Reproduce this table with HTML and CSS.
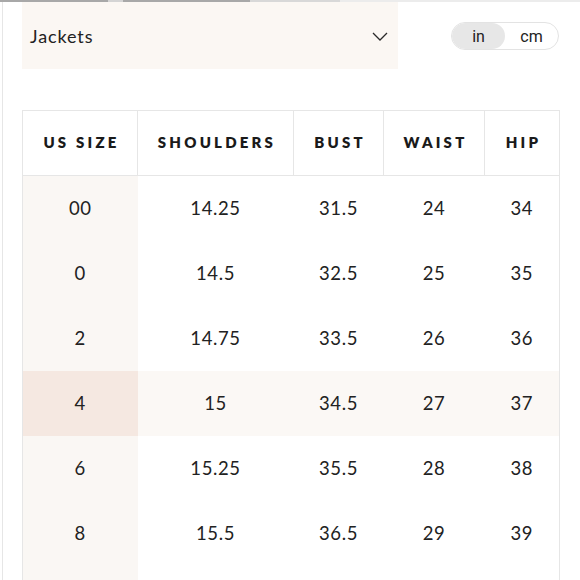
FILE: index.html
```html
<!DOCTYPE html>
<html>
<head>
<meta charset="utf-8">
<link rel="stylesheet" href="styles.css">
</head>
<body>
<div class="topbar"></div>
<div class="page">
  <div class="controls">
    <div class="dropdown">
      <span class="dropdown-label">Jackets</span>
      <svg class="chevron" width="16" height="9" viewBox="0 0 16 9"><path d="M1 1 L8 8 L15 1" fill="none" stroke="#2a2a2a" stroke-width="1.3"/></svg>
    </div>
    <div class="unit-toggle">
      <span class="unit unit-active">in</span>
      <span class="unit">cm</span>
    </div>
  </div>
  <table class="size-table">
    <colgroup>
      <col class="c1"><col class="c2"><col class="c3"><col class="c4"><col class="c5">
    </colgroup>
    <thead>
      <tr><th>US SIZE</th><th>SHOULDERS</th><th>BUST</th><th>WAIST</th><th>HIP</th></tr>
    </thead>
    <tbody>
      <tr><td>00</td><td>14.25</td><td>31.5</td><td>24</td><td>34</td></tr>
      <tr><td>0</td><td>14.5</td><td>32.5</td><td>25</td><td>35</td></tr>
      <tr><td>2</td><td>14.75</td><td>33.5</td><td>26</td><td>36</td></tr>
      <tr class="selected"><td>4</td><td>15</td><td>34.5</td><td>27</td><td>37</td></tr>
      <tr><td>6</td><td>15.25</td><td>35.5</td><td>28</td><td>38</td></tr>
      <tr><td>8</td><td>15.5</td><td>36.5</td><td>29</td><td>39</td></tr>
      <tr class="partial"><td></td><td></td><td></td><td></td><td></td></tr>
    </tbody>
  </table>
</div>
</body>
</html>
```
FILE: styles.css
```css
html { overflow: hidden; }
body {
  margin: 0;
  background: #ffffff;
  font-family: Lato, "Open Sans", sans-serif;
  color: #222222;
}
.topbar {
  height: 2px;
  background: linear-gradient(to right, #a8a8a8 0, #a8a8a8 108px, #d4d4d4 108px, #d4d4d4 123px, #a8a8a8 123px, #a8a8a8 250px, #d8d8d8 250px, #d8d8d8 340px, #ececec 340px);
}
.page {
  margin-left: 2px;
  border-left: 1px solid #e6e6e6;
  padding-left: 19px;
  min-height: 600px;
}
.controls {
  display: flex;
  align-items: flex-start;
  width: 537px;
}
.dropdown {
  width: 376px;
  height: 67px;
  background: #fbf7f3;
  display: flex;
  align-items: center;
  justify-content: space-between;
  padding: 0 10px 0 8px;
  box-sizing: border-box;
}
.dropdown-label {
  font-size: 18px;
  letter-spacing: 0.9px;
  margin-top: 1px;
}
.chevron { margin-top: 2px; }
.unit-toggle {
  margin-left: auto;
  margin-top: 20px;
  width: 108px;
  height: 28px;
  box-sizing: border-box;
  border: 1px solid #e3e3e3;
  border-radius: 14px;
  display: flex;
  overflow: hidden;
  font-family: Roboto, "Liberation Sans", sans-serif;
  font-size: 16px;
}
.unit {
  flex: 1;
  display: flex;
  align-items: center;
  justify-content: center;
  color: #222;
}
.unit-active {
  background: #e7e7e7;
  border-radius: 14px;
}
.size-table {
  margin-top: 41px;
  border-collapse: collapse;
  table-layout: fixed;
  width: 537px;
}
.c1 { width: 115px; }
.c2 { width: 156px; }
.c3 { width: 90px; }
.c4 { width: 101px; }
.c5 { width: 75px; }
.size-table th {
  height: 61px;
  border: 1px solid #e6e6e6;
  font-size: 15px;
  font-weight: 800;
  letter-spacing: 3.2px;
  text-align: center;
  padding: 0 0 3px 3px;
  color: #1a1a1a;
}
.size-table td {
  height: 63px;
  padding: 0 0 2px 0;
  text-align: center;
  font-size: 18.5px;
  letter-spacing: 0.6px;
  color: #222;
}
.size-table td:first-child {
  background: #faf7f4;
  border-left: 1px solid #e6e6e6;
}
.size-table td:last-child {
  border-right: 1px solid #e6e6e6;
}
.size-table tr.selected td {
  background: #fbf8f5;
}
.size-table tr.selected td:first-child {
  background: #f5e8e1;
}
```
